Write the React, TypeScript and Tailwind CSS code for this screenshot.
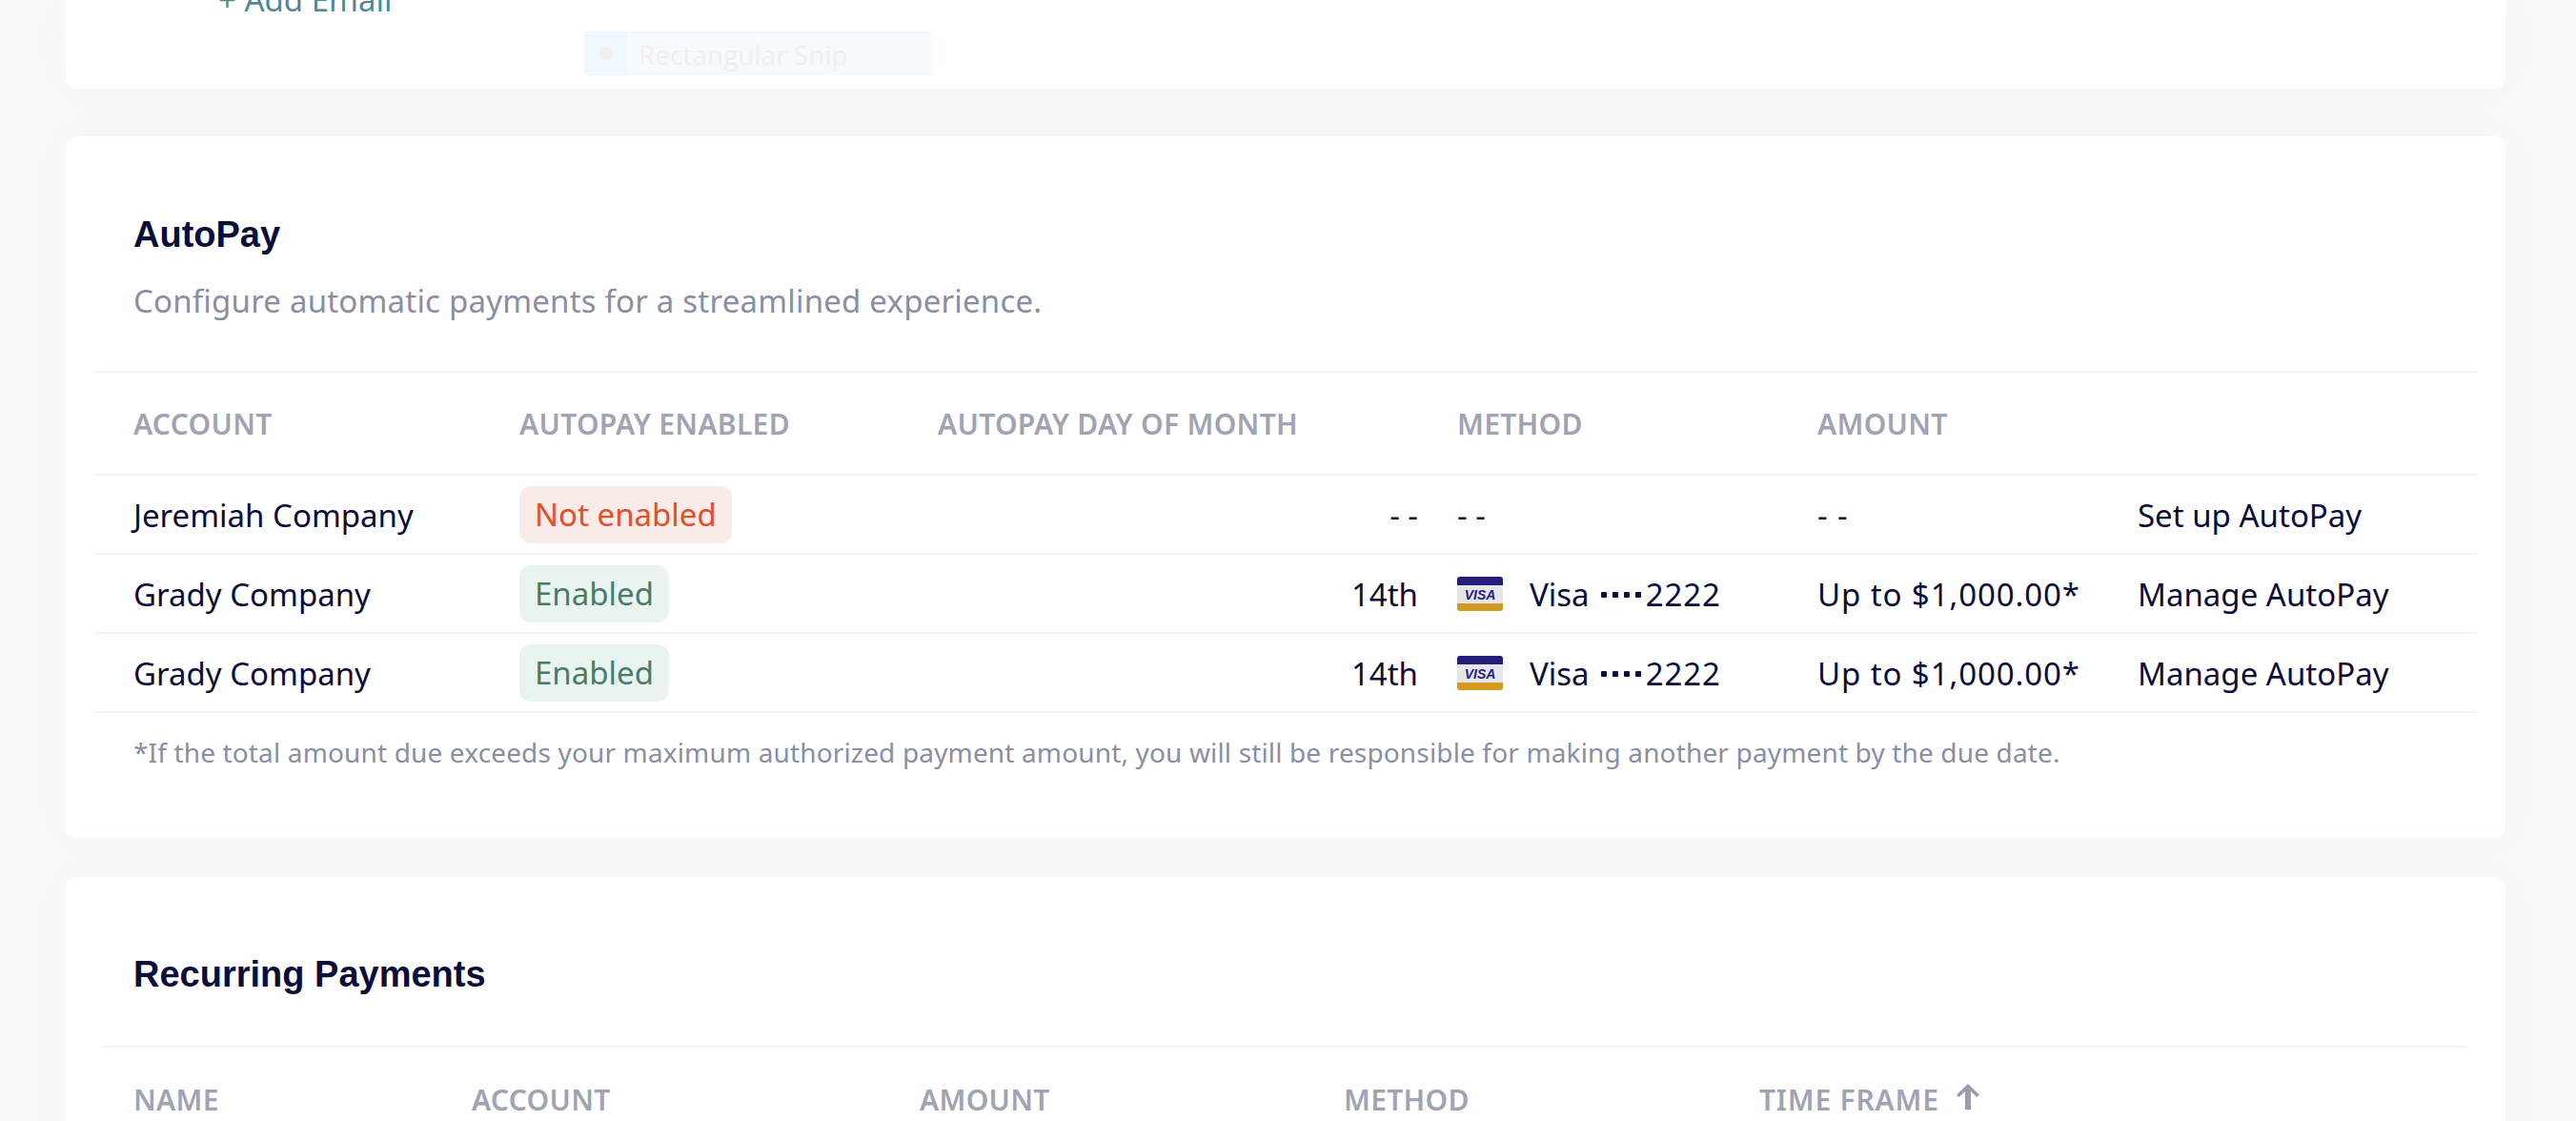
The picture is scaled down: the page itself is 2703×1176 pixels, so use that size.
const bodyFont = "font-['Noto_Sans',sans-serif]"

const rows = [
  { account: 'Jeremiah Company', enabled: false, day: '- -', method: null, amount: '- -', action: 'Set up AutoPay' },
  { account: 'Grady Company', enabled: true, day: '14th', method: 'Visa', amount: 'Up to $1,000.00*', action: 'Manage AutoPay' },
  { account: 'Grady Company', enabled: true, day: '14th', method: 'Visa', amount: 'Up to $1,000.00*', action: 'Manage AutoPay' },
]

const columns = 'grid grid-cols-[405px_439px_545px_378px_336px_1fr] items-center pl-[41px]'

function VisaIcon() {
  return (
    <svg width="48" height="36" viewBox="0 0 48 36" className="shrink-0">
      <rect width="48" height="36" rx="3" fill="#e6e6e8" />
      <path d="M0 9V3a3 3 0 0 1 3-3h42a3 3 0 0 1 3 3v6z" fill="#231d7c" />
      <path d="M0 28v5a3 3 0 0 0 3 3h42a3 3 0 0 0 3-3v-5z" fill="#d39a22" />
      <text x="24" y="23.500" textAnchor="middle" fontFamily="Liberation Sans" fontWeight="700" fontStyle="italic" fontSize="14" fill="#231d7c">
        VISA
      </text>
    </svg>
  )
}

function SortArrow() {
  return (
    <svg width="24" height="27" viewBox="0 0 24 27" className="-mt-[6px] shrink-0">
      <path d="M12 0l12 11.500-2.500 2.500L15 8v19H9V8l-6.500 6L0 11.500z" fill="#9a9dae" />
    </svg>
  )
}

function MaskDots() {
  return (
    <span className="ml-[12px] mr-[5px] flex gap-[6px] pt-[2px]">
      {[0, 1, 2, 3].map((d) => (
        <span key={d} className="h-[6px] w-[6px] rounded-[1px] bg-[#0b0d3b]" />
      ))}
    </span>
  )
}

export default function App() {
  return (
    <div className={`h-[1176px] w-[2703px] overflow-hidden bg-[#f8f9fb] pl-[69px] pr-[74px] ${bodyFont}`}>
      {/* tail of the card above, the page is scrolled */}
      <section className="relative h-[93px] overflow-hidden rounded-b-[12px] bg-white shadow-[0_0_60px_rgba(0,0,0,0.025)]">
        <div className="-mt-[19px] pl-[160px] text-[33px] leading-[38px] text-[#4f8797]">+ Add Email</div>
        <div className="absolute left-[544px] top-[33px] flex h-[46px] w-[364px] items-center bg-[#f5fafe]">
          <div className="flex h-full w-[45px] items-center justify-center bg-[#eff7fe]">
            <span className="h-[14px] w-[14px] rounded-full bg-[#efefef]" />
          </div>
          <span className="pl-[12px] pt-[2px] font-['Open_Sans',sans-serif] text-[28px] text-[#efefef]">Rectangular Snip</span>
        </div>
      </section>

      <section className="mt-[50px] h-[736px] rounded-[12px] bg-white px-[30px] pt-[84px] shadow-[0_0_60px_rgba(0,0,0,0.025)]">
        <h2 className="pl-[41px] font-['Liberation_Sans',sans-serif] text-[38px] font-bold leading-[38px] text-[#0b0d3b]">AutoPay</h2>
        <p className="mt-[31px] pl-[41px] text-[33px] leading-[40px] tracking-[0.2px] text-[#8a8ea3]">Configure automatic payments for a streamlined experience.</p>

        <div className={`${columns} mt-[53px] h-[110px] border-y-[2px] border-[#f3f3f5] text-[30px] font-semibold tracking-[0.3px] text-[#a0a3b4]`}>
          <div>ACCOUNT</div>
          <div>AUTOPAY ENABLED</div>
          <div>AUTOPAY DAY OF MONTH</div>
          <div>METHOD</div>
          <div>AMOUNT</div>
          <div />
        </div>

        {rows.map((row, i) => (
          <div key={i} className={`${columns} h-[83px] border-b-[2px] border-[#f3f3f5] text-[33px] text-[#0b0d3b]`}>
            <div className="pt-[2px]">{row.account}</div>
            <div>
              {row.enabled ? (
                <span className="inline-block rounded-[12px] bg-[#e9f3f0] px-[16px] py-[8px] leading-[44px] text-[#4a7b68]">Enabled</span>
              ) : (
                <span className="inline-block rounded-[12px] bg-[#f9ebe7] px-[16px] py-[8px] leading-[44px] text-[#e0502a]">Not enabled</span>
              )}
            </div>
            <div className="pr-[41px] pt-[2px] text-right">{row.day}</div>
            <div className="flex items-center">
              {row.method ? (
                <>
                  <VisaIcon />
                  <span className="ml-[28px] pt-[2px]">{row.method}</span>
                  <MaskDots />
                  <span className="pt-[2px] tracking-[0.9px]">2222</span>
                </>
              ) : (
                <span className="pt-[2px]">- -</span>
              )}
            </div>
            <div className="pt-[2px] tracking-[0.9px]">{row.amount}</div>
            <div className="pt-[2px]">{row.action}</div>
          </div>
        ))}

        <p className="mt-[21px] pl-[41px] text-[28px] leading-[40px] tracking-[0.15px] text-[#8a8ea3]">
          *If the total amount due exceeds your maximum authorized payment amount, you will still be responsible for making another payment by the due date.
        </p>
      </section>

      <section className="mt-[41px] h-[300px] rounded-t-[12px] bg-white px-[40px] pt-[83px] shadow-[0_0_60px_rgba(0,0,0,0.025)]">
        <h2 className="pl-[31px] font-['Liberation_Sans',sans-serif] text-[38px] font-bold leading-[38px] text-[#0b0d3b]">Recurring Payments</h2>
        <div className="mt-[56px] grid h-[79px] grid-cols-[355px_470px_445px_436px_1fr] items-end border-t-[2px] border-[#f3f3f5] pl-[31px] text-[30px] font-semibold tracking-[0.3px] text-[#a0a3b4]">
          <div>NAME</div>
          <div>ACCOUNT</div>
          <div>AMOUNT</div>
          <div>METHOD</div>
          <div className="flex items-center gap-[18px] tracking-[0.8px]">
            TIME FRAME
            <SortArrow />
          </div>
        </div>
      </section>
    </div>
  )
}
